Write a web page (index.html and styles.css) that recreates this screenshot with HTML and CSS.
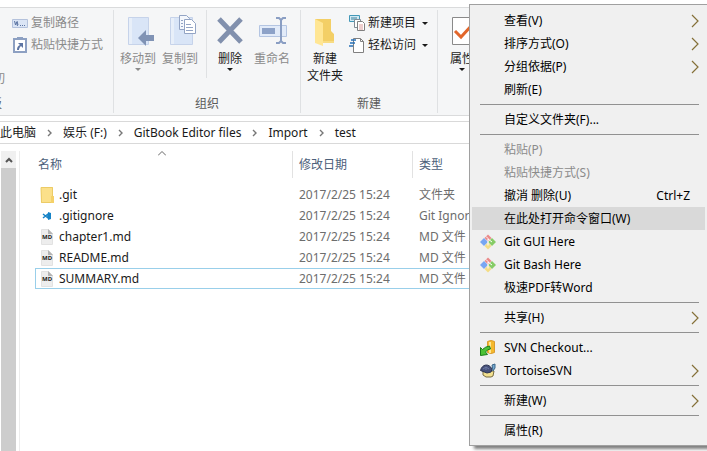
FILE: index.html
```
<!DOCTYPE html>
<html lang="zh-CN">
<head>
    <meta charset="UTF-8">
    <meta name="viewport" content="width=device-width, initial-scale=1.0">
    <title>test</title>
    <link rel="stylesheet" href="styles.css">
</head>
<body>
    <!-- shared symbols -->
    <svg class="symbols" aria-hidden="true">
        <symbol id="chevron" viewBox="0 0 8 14"><path d="M1 1l6 6-6 6" fill="none" stroke="#857038" stroke-width="1.2"/></symbol>
        <symbol id="crumb" viewBox="0 0 5 8"><path d="M1 1l3 3-3 3" fill="none" stroke="#777" stroke-width="1.4"/></symbol>
        <symbol id="md" viewBox="0 0 14 16">
            <path d="M1.5.5h7l4 4v11h-11z" fill="#ededed" stroke="#e2e2e2"/>
            <path d="M8 0l5 5H8z" fill="#b4b4b4"/>
            <text x="2" y="10" class="md-label">MD</text>
        </symbol>
        <symbol id="git" viewBox="0 0 16 16">
            <path d="M8 .5L11.500 4 8 7.500 4.500 4z" fill="#ea8a8a"/>
            <path d="M4 4l4 4-4 4-4-4z" fill="#78a6f2"/>
            <path d="M12 4l4 4-4 4-4-4z" fill="#86cc66"/>
            <path d="M8 8.500l3.500 3.500L8 15.500 4.500 12z" fill="#f4dd86"/>
            <path d="M6 2.500l2 2v7M8 5l4 3" fill="none" stroke="#fff"/>
        </symbol>
    </svg>

    <div class="ribbon">
        <section class="group clipboard">
            <div class="group-body clip-list">
                <button class="small" disabled>
                    <svg width="16" height="16" viewBox="0 0 16 16"><path d="M.5 4.500h15v8H.5z" fill="#dbe5f5" stroke="#b4c2dc"/><path d="M2.500 6l1 4 1-3 1 4M5 6l1 4" fill="none" stroke="#5d75a3"/><path d="M8 10.500h1m1 0h1m1 0h1" stroke="#5d75a3"/></svg>
                    复制路径
                </button>
                <button class="small" disabled>
                    <svg width="16" height="16" viewBox="0 0 16 16"><path d="M2 2h12v13H2z" fill="#fff" stroke="#8da0c2" stroke-width="2"/><path d="M5 0h6v3H5z" fill="#8da0c2"/><path d="M5 13c0-3 1-4 3-5L6 6h5v5L9 9c-1 1-2 2-2 4z" fill="#5d75a3"/></svg>
                    粘贴快捷方式
                </button>
                <span class="cut">切</span>
            </div>
            <h2 class="edge">板</h2>
        </section>
        <section class="group organize">
            <div class="group-body">
                <button class="large" disabled>
                    <svg width="32" height="32" viewBox="0 0 32 32"><path d="M6.500 2.500h20v27h-20z" fill="#d9e5f7" stroke="#c6d3ea"/><path d="M7 3h3v26H7z" fill="#e8eff9"/><path d="M16 23l8-8v5h8v6h-8v5z" fill="#8093b5"/></svg>
                    <span>移动到</span><i class="arrow"></i>
                </button>
                <button class="large" disabled>
                    <svg width="32" height="32" viewBox="0 0 32 32"><path d="M6.500 2.500h22v27h-22z" fill="#d9e5f7" stroke="#c6d3ea"/><path d="M7 3h3v26H7z" fill="#e8eff9"/><path d="M15.500.5h7l3 3v11h-10z" fill="#f4f7fc" stroke="#93a4c4"/><path d="M20.500 4.500h7l4 4v10h-11z" fill="#fff" stroke="#93a4c4"/><path d="M17 5.500h2m-2 3h2m-2 3h2m3-2h5m-5 3h7m-7 3h7" stroke="#93a4c4"/></svg>
                    <span>复制到</span><i class="arrow"></i>
                </button>
                <button class="large delete">
                    <svg width="32" height="32" viewBox="0 0 32 32"><path d="M5 4l22 23M27 4L5 27" stroke="#8190ad" stroke-width="5"/></svg>
                    <span>删除</span><i class="arrow"></i>
                </button>
                <button class="large" disabled>
                    <svg width="32" height="32" viewBox="0 0 32 32"><path d="M3.500 10.500h27v11h-27z" fill="#e2ebf9" stroke="#b4c5e2"/><path d="M6 13h13v6H6z" fill="#8da2c8"/><path d="M20 3h3l2 2 2-2h3M25 4v23M20 28h3l2-2 2 2h3" fill="none" stroke="#8a9ec3" stroke-width="2"/></svg>
                    <span>重命名</span>
                </button>
            </div>
            <h2>组织</h2>
        </section>
        <section class="group create">
            <div class="group-body">
                <button class="large">
                    <svg width="32" height="32" viewBox="0 0 32 32"><path d="M6 4h16v12l3 3v9H12z" fill="#f3cf66"/><path d="M6 4l8 4v23l-8-3z" fill="#ffe694"/><path d="M14 26h11v2H14z" fill="#f8dc84"/></svg>
                    <span>新建<br>文件夹</span>
                </button>
                <div class="stack">
                    <button class="small">
                        <svg width="16" height="16" viewBox="0 0 16 16"><path d="M.5.500h10v6H.5z" fill="#d2e9f3" stroke="#4298b8"/><path d="M3 2v3m2-3v3m2-3v3" stroke="#39829e"/><path d="M5.500 4.500h6v8h-6z" fill="#fff" stroke="#818c96"/><path d="M8.500 6.500h5l2 2v7h-7z" fill="#fff" stroke="#808080"/><path d="M10 10h4m-4 2h4m-4 2h4" stroke="#dc9c9c"/></svg>
                        新建项目<i class="arrow"></i>
                    </button>
                    <button class="small">
                        <svg width="16" height="16" viewBox="0 0 16 16"><path d="M4.500 1.500h7l3 3v11h-10z" fill="#fff" stroke="#808080"/><path d="M11.500 1.500v3h3" fill="none" stroke="#808080"/><path d="M2 3h5M1 6h5M0 9h4" stroke="#2872b8" stroke-width="1.500"/></svg>
                        轻松访问<i class="arrow"></i>
                    </button>
                </div>
            </div>
            <h2>新建</h2>
        </section>
        <section class="group open">
            <div class="group-body">
                <button class="large">
                    <svg width="32" height="32" viewBox="0 0 32 32"><path d="M6.500 2.500h21v27h-21z" fill="#fff" stroke="#8a8a8a"/><path d="M9 16l6 6 11-12" fill="none" stroke="#e2662b" stroke-width="3"/></svg>
                    <span>属性</span><i class="arrow"></i>
                </button>
            </div>
        </section>
    </div>

    <nav class="address">
        <a href="#">此电脑</a><svg width="5" height="8"><use href="#crumb"/></svg>
        <a href="#">娱乐 (F:)</a><svg width="5" height="8"><use href="#crumb"/></svg>
        <a href="#">GitBook Editor files</a><svg width="5" height="8"><use href="#crumb"/></svg>
        <a href="#">Import</a><svg width="5" height="8"><use href="#crumb"/></svg>
        <a href="#">test</a>
    </nav>

    <main class="content">
        <div class="scrollbar">
            <button aria-label="向上滚动"><svg width="8" height="6" viewBox="0 0 8 6"><path d="M1 5l3-3 3 3" fill="none" stroke="#555" stroke-width="2"/></svg></button>
        </div>
        <div class="files">
            <svg class="sort" width="8" height="5" viewBox="0 0 8 5"><path d="M0 4.500l4-4 4 4" fill="none" stroke="#666"/></svg>
            <table>
                <thead>
                    <tr><th class="name">名称</th><th class="date">修改日期</th><th>类型</th></tr>
                </thead>
                <tbody>
                    <tr>
                        <td><div class="file"><svg width="14" height="16" viewBox="0 0 14 16"><path d="M1 0h12v16H1z" fill="#fbe08a"/><path d="M1 .5h11.500v15H1.500z" fill="none" stroke="#eccb66"/><path d="M11 9h3v7h-3z" fill="#f5d169"/></svg>.git</div></td>
                        <td>2017/2/25 15:24</td><td>文件夹</td>
                    </tr>
                    <tr>
                        <td><div class="file"><svg width="14" height="16" viewBox="0 0 14 16"><path d="M3 6l5 4V6l-5 4" fill="none" stroke="#1683c7" stroke-width="1.500"/><path d="M8 4l3 1v6l-3 1z" fill="#1683c7"/></svg>.gitignore</div></td>
                        <td>2017/2/25 15:24</td><td>Git Ignore 源文件</td>
                    </tr>
                    <tr>
                        <td><div class="file"><svg width="14" height="16"><use href="#md"/></svg>chapter1.md</div></td>
                        <td>2017/2/25 15:24</td><td>MD 文件</td>
                    </tr>
                    <tr>
                        <td><div class="file"><svg width="14" height="16"><use href="#md"/></svg>README.md</div></td>
                        <td>2017/2/25 15:24</td><td>MD 文件</td>
                    </tr>
                    <tr class="selected">
                        <td><div class="file"><svg width="14" height="16"><use href="#md"/></svg>SUMMARY.md</div></td>
                        <td>2017/2/25 15:24</td><td>MD 文件</td>
                    </tr>
                </tbody>
            </table>
        </div>
    </main>

    <!-- context menu -->
    <div class="menu" role="menu">
        <button role="menuitem">查看(V)<svg class="more"><use href="#chevron"/></svg></button>
        <button role="menuitem">排序方式(O)<svg class="more"><use href="#chevron"/></svg></button>
        <button role="menuitem">分组依据(P)<svg class="more"><use href="#chevron"/></svg></button>
        <button role="menuitem">刷新(E)</button>
        <hr>
        <button role="menuitem">自定义文件夹(F)...</button>
        <hr>
        <button role="menuitem" disabled>粘贴(P)</button>
        <button role="menuitem" disabled>粘贴快捷方式(S)</button>
        <button role="menuitem">撤消 删除(U)<span class="key">Ctrl+Z</span></button>
        <button role="menuitem" class="active">在此处打开命令窗口(W)</button>
        <button role="menuitem"><svg class="icon"><use href="#git"/></svg>Git GUI Here</button>
        <button role="menuitem"><svg class="icon"><use href="#git"/></svg>Git Bash Here</button>
        <button role="menuitem">极速PDF转Word</button>
        <hr>
        <button role="menuitem">共享(H)<svg class="more"><use href="#chevron"/></svg></button>
        <hr>
        <button role="menuitem">
            <svg class="icon" viewBox="0 0 16 16"><path d="M7.500 1.500q3.500-2 7 0v11q-3.500 2-7 0z" fill="#f5b92c" stroke="#d89a30"/><path d="M10 2v11" stroke="#ffe490" stroke-width="2"/><path d="M.5 15.500v-8l2 2q3-3 7-3.500l1 3q-3 0-5 3l2 2.500z" fill="#4cc235" stroke="#1b7d18"/></svg>
            SVN Checkout...
        </button>
        <button role="menuitem">
            <svg class="icon" viewBox="0 0 16 16"><path d="M3 8h11l-1 5-2 1H6l-3-2z" fill="#f2e08f" stroke="#776b40"/><path d="M.5 7.500C2 1 9 0 12 6l-1 3-4 1z" fill="#46507a" stroke="#2c3452"/><path d="M3 6l3-2 3 2M6 4v3" fill="none" stroke="#6d7ba4"/><path d="M12 2l3-1v4l-2 3z" fill="#74a8d0" stroke="#3c6688"/></svg>
            TortoiseSVN<svg class="more"><use href="#chevron"/></svg>
        </button>
        <hr>
        <button role="menuitem">新建(W)<svg class="more"><use href="#chevron"/></svg></button>
        <hr>
        <button role="menuitem">属性(R)</button>
    </div>
</body>
</html>
```

FILE: styles.css
```
* {
    box-sizing: border-box;
}
body {
    margin: 0;
    min-height: 100vh;
    display: flex;
    flex-direction: column;
    overflow: hidden;
    background-color: #fff;
    color: #1a1a1a;
    font-family: "Noto Sans", "Noto Sans CJK SC", sans-serif;
    font-size: 12px;
    line-height: 16px;
}
button {
    padding: 0;
    border: none;
    background: none;
    color: inherit;
    font: inherit;
}
button:disabled {
    color: #8b8b8b;
}
svg {
    flex: none;
}
.symbols {
    position: absolute;
    width: 0;
    height: 0;
}
.md-label {
    fill: #222;
    font-size: 6px;
    font-weight: bold;
}

/* ribbon */
.ribbon {
    display: flex;
    height: 109px;
    margin-top: 7px;
    padding: 2px 0;
    border-top: 1px solid #dadbdc;
    border-bottom: 1px solid #dadbdc;
    background-color: #f5f6f7;
}
.group {
    display: flex;
    flex-direction: column;
    flex: none;
    border-right: 1px solid #dfe1e3;
}
.group h2 {
    margin: 0 0 1px;
    color: #5a5a5a;
    font-size: 12px;
    font-weight: normal;
    text-align: center;
}
.group-body {
    display: flex;
    align-items: flex-start;
    flex: 1;
}
.clipboard {
    width: 114px;
    overflow: hidden;
}
.clip-list {
    flex-direction: column;
    gap: 6px;
    padding: 5px 0 0 12px;
}
.cut {
    margin: 12px 0 0 -19px;
    color: #8b8b8b;
}
.group .edge {
    margin-left: -10px;
    text-align: left;
}
.small {
    display: flex;
    align-items: center;
    gap: 3px;
}
.large {
    display: flex;
    flex-direction: column;
    align-items: center;
    width: 42px;
    padding-top: 5px;
}
.large span {
    margin-top: 3px;
    line-height: 17px;
}
.arrow {
    border: 3px solid transparent;
    border-top-color: currentColor;
    border-bottom: none;
}
.large .arrow {
    margin-top: 1px;
}
.small .arrow {
    margin-left: 3px;
}
.organize {
    width: 187px;
}
.organize .group-body {
    padding-left: 3px;
}
.organize .delete {
    width: 45px;
    height: 68px;
    margin-left: 5px;
    padding-left: 2px;
    border-left: 1px solid #dfe1e3;
}
.create {
    width: 137px;
}
.create .large {
    width: 48px;
}
.stack {
    display: flex;
    flex-direction: column;
    gap: 6px;
    padding-top: 5px;
}
.open {
    padding-left: 3px;
}

/* address bar */
.address {
    display: flex;
    align-items: center;
    gap: 11px;
    height: 23px;
    margin-top: 5px;
    border-top: 1px solid #d9d9d9;
    border-bottom: 1px solid #d9d9d9;
}
.address a {
    color: #1a1a1a;
    text-decoration: none;
    white-space: nowrap;
}

/* file list */
.content {
    display: flex;
    flex: 1;
    margin-top: 7px;
}
.scrollbar {
    width: 15px;
    margin: 0 3px 0 1px;
    background-color: #cdcdcd;
}
.scrollbar button {
    display: flex;
    align-items: center;
    justify-content: center;
    width: 15px;
    height: 17px;
    background-color: #f0f0f0;
}
.files {
    flex: 1;
    position: relative;
    padding-left: 15px;
    border-left: 1px solid #ececec;
}
.sort {
    position: absolute;
    left: 138px;
    top: 0;
}
table {
    width: 100%;
    table-layout: fixed;
    border-collapse: separate;
    border-spacing: 0;
}
th {
    height: 27px;
    padding: 0 0 0 6px;
    border-left: 1px solid #e2e2e2;
    color: #4c607a;
    font-weight: normal;
    text-align: left;
}
.name {
    width: 257px;
    padding-left: 3px;
    border-left: none;
}
.date {
    width: 120px;
}
thead::after {
    content: "";
    display: block;
    height: 6px;
}
td {
    height: 21px;
    padding: 0 0 0 7px;
    border: 1px solid transparent;
    border-width: 1px 0;
    color: #6d6d6d;
    white-space: nowrap;
}
td:first-child {
    padding-left: 4px;
    border-left-width: 1px;
    color: #1a1a1a;
}
.file {
    display: flex;
    align-items: center;
    gap: 5px;
}
.selected td {
    border-color: #99cfea;
}

/* context menu */
.menu {
    position: absolute;
    top: 4px;
    right: -1px;
    width: 239px;
    padding: 4px 2px 3px;
    border: 1px solid #a0a0a0;
    background-color: #f0f0f0;
    box-shadow: 4px 4px 3px -1px rgba(0, 0, 0, 0.5);
    color: #000;
}
.menu button {
    display: flex;
    align-items: center;
    width: 100%;
    height: 23px;
    padding: 0 6px 0 32px;
}
.menu .active {
    background-color: #d9d9d9;
}
.menu hr {
    height: 1px;
    margin: 3px 6px 3px 8px;
    border: none;
    background-color: #919191;
}
.icon {
    width: 16px;
    height: 16px;
    margin: 0 8px 0 -24px;
}
.more {
    width: 8px;
    height: 14px;
    margin-left: auto;
}
.key {
    margin: 0 9px 0 auto;
}
```
